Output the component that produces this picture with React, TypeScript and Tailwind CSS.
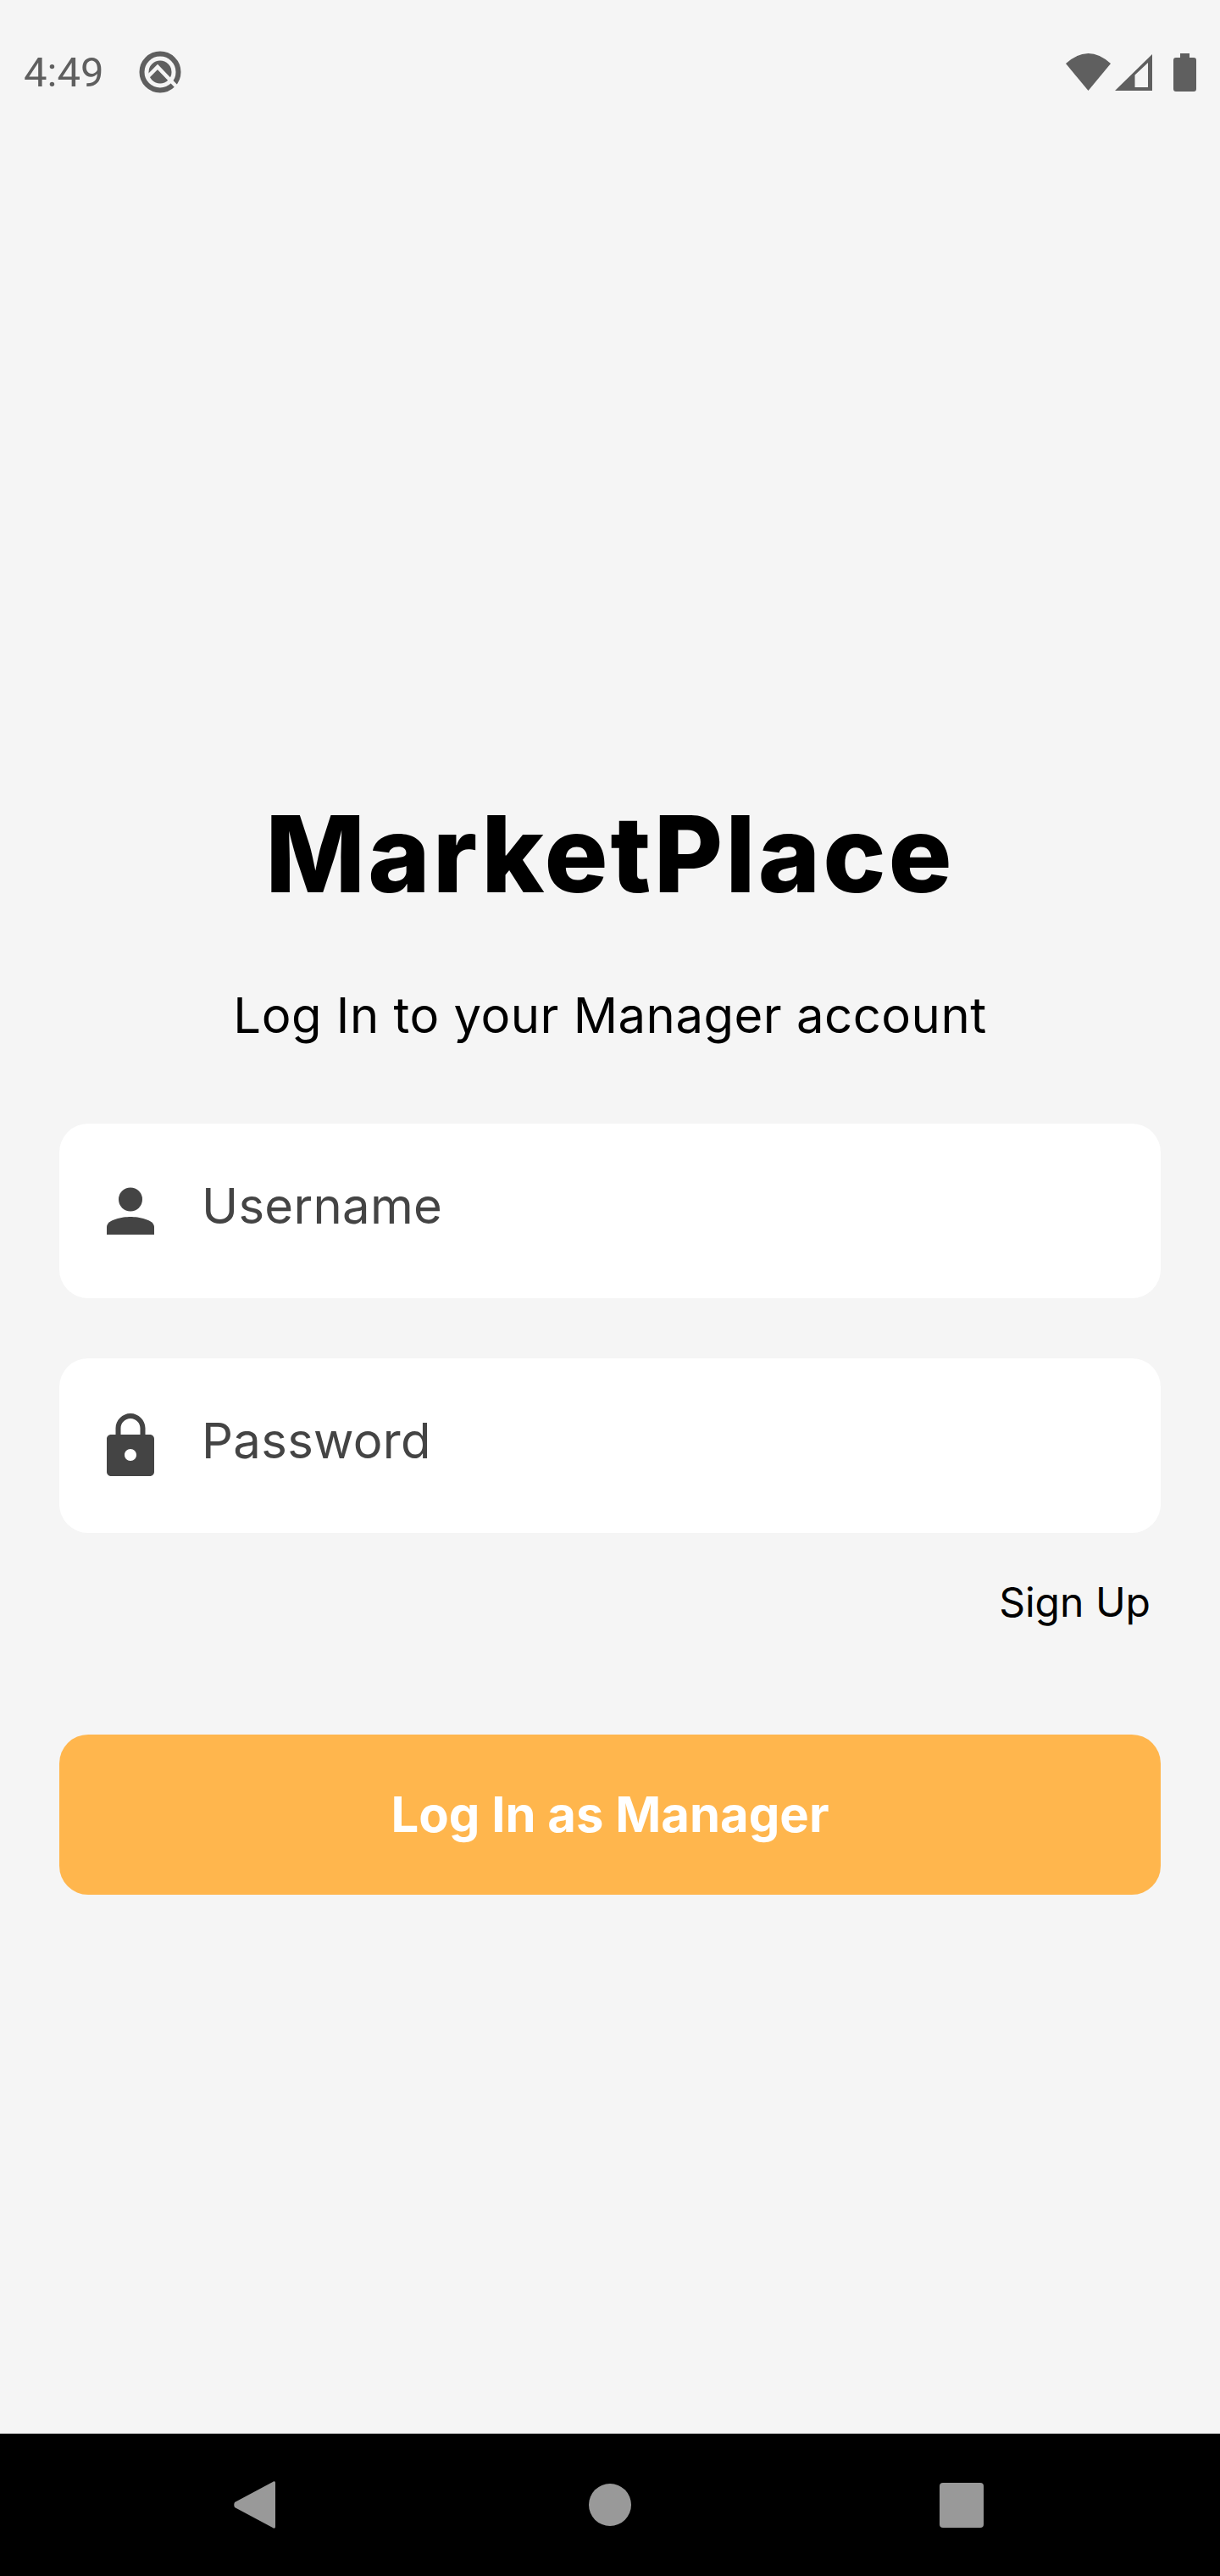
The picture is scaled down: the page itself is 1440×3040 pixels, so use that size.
const font = { fontFamily: '"Inter", "Liberation Sans", sans-serif' };

function ProfileIcon() {
  return (
    <svg viewBox="0 0 56 56" className="h-[56px] w-[56px] fill-[#444444]">
      <circle cx="28" cy="14.5" r="14" />
      <path d="M0 56V47C0 38 19 35 28 35S56 38 56 47V56Z" />
    </svg>
  );
}

function LockIcon() {
  return (
    <svg viewBox="0 0 56 74" className="-mt-[3px] h-[74px] w-[56px] fill-[#444444]">
      <path
        fillRule="evenodd"
        d="M51 25h-5.500v-7.500C45.500 8 37.500 0 28 0S10.500 8 10.500 17.500V25H5c-2.800 0-5 2.200-5 5v39c0 2.800 2.200 5 5 5h46c2.800 0 5-2.200 5-5V30c0-2.800-2.200-5-5-5ZM16.500 17.500C16.500 11.200 21.700 6 28 6s11.500 5.200 11.500 11.500V25h-23V17.500ZM28 56c-3.900 0-7-3.100-7-7s3.100-7 7-7 7 3.100 7 7-3.100 7-7 7Z"
      />
    </svg>
  );
}

function Field({ label, icon }: { label: string; icon: React.ReactNode }) {
  return (
    <div className="flex h-[206px] items-center rounded-[34px] bg-white pl-[56px]">
      <div className="flex w-[56px] justify-center">{icon}</div>
      <span className="ml-[56px] -mt-[12px] text-[58px] leading-none tracking-[0.3px] text-[#444444]">{label}</span>
    </div>
  );
}

export default function App() {
  return (
    <div className="flex h-[3040px] w-[1440px] flex-col overflow-hidden bg-[#f5f5f5]" style={font}>
      {/* status bar */}
      <div className="flex h-[170px] items-center justify-between pl-[28px] pr-[28px]">
        <div className="flex items-center gap-[42px]">
          <span className="text-[49px] leading-none text-[#5f5f5f]" style={{ fontFamily: '"Roboto", sans-serif' }}>4:49</span>
          <svg viewBox="0 0 50 50" className="h-[50px] w-[50px]">
            <circle cx="25" cy="25" r="21.500" fill="none" stroke="#5f5f5f" strokeWidth="6" />
            <circle cx="25" cy="25" r="13.500" fill="#5f5f5f" />
            <path d="M10 31L22 19L46 44" fill="none" stroke="#f5f5f5" strokeWidth="4.500" />
          </svg>
        </div>
        <div className="flex items-center">
          <svg viewBox="0 0 53 44" className="h-[44px] w-[53px] fill-[#5f5f5f]">
            <path d="M0 12Q26.500 -12 53 12L26.500 44Z" />
          </svg>
          <svg viewBox="0 0 44 43" className="ml-[5px] h-[43px] w-[44px] fill-[#5f5f5f]">
            <path fillRule="evenodd" d="M44 0V43H0ZM39 10L23.500 24.500V39H39Z" />
          </svg>
          <svg viewBox="0 0 27 45" className="ml-[25px] h-[45px] w-[27px] fill-[#5f5f5f]">
            <path d="M8 0H19V5H24C26 5 27 6 27 8V42C27 44 26 45 24 45H3C1 45 0 44 0 42V8C0 6 1 5 3 5H8Z" />
          </svg>
        </div>
      </div>

      {/* login form */}
      <main className="flex flex-1 flex-col px-[70px] pt-[760px]">
        <h1 className="text-center text-[125px] font-extrabold leading-[156px] tracking-[3px] text-black">MarketPlace</h1>
        <p className="mt-[72px] text-center text-[58px] leading-[80px] tracking-[0.5px] text-black">Log In to your Manager account</p>
        <div className="mt-[88px] flex flex-col gap-[71px]">
          <Field label="Username" icon={<ProfileIcon />} />
          <Field label="Password" icon={<LockIcon />} />
        </div>
        <div className="mt-[46px] pr-[12px] text-right text-[48px] leading-[72px] text-black">Sign Up</div>
        <button className="mt-[120px] h-[189px] rounded-[34px] bg-[#ffb64d] text-[58px] font-bold text-white">
          Log In as Manager
        </button>
      </main>

      {/* nav bar */}
      <div className="flex h-[168px] items-center bg-black pl-[276px]">
        <svg viewBox="0 0 48 56" className="h-[56px] w-[49px] fill-[#999999]" preserveAspectRatio="none">
          <path d="M48 2V54C48 56 46 56 45 55L1 31C0 29 0 27 1 25L45 1C46 0 48 0 48 2Z" />
        </svg>
        <div className="ml-[370px] h-[50px] w-[50px] rounded-full bg-[#999999]" />
        <div className="ml-[364px] h-[53px] w-[52px] rounded-[4px] bg-[#999999]" />
      </div>
    </div>
  );
}
